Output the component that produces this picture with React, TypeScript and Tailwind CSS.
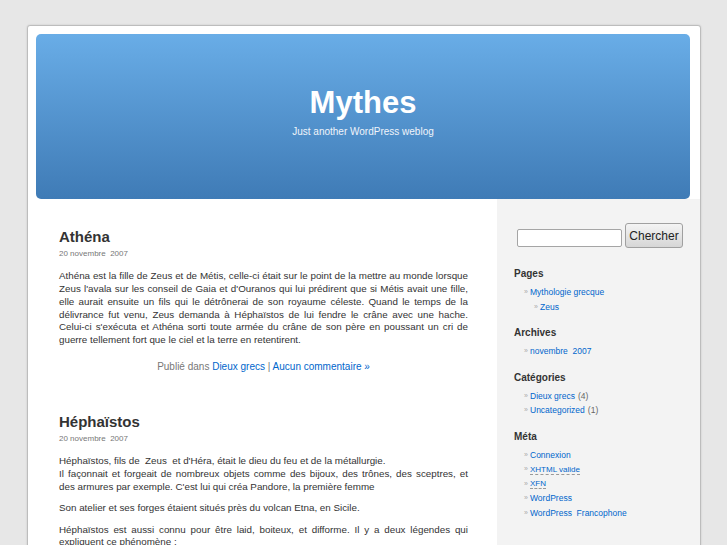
import React from 'react';

const font = { fontFamily: '"Liberation Sans", Arial, sans-serif' };

// renders justified lines with the same breaks as the original page
// (the last line, and lines that end in a <br>, stay left aligned)
function Lines({ lines, breaks = [] }: { lines: string[]; breaks?: number[] }) {
  return (
    <p>
      {lines.map((l, i) => {
        const plain = i === lines.length - 1 || breaks.includes(i);
        return (
          <span
            key={i}
            className={`block whitespace-nowrap ${plain ? 'text-left' : 'text-justify [text-align-last:justify]'}`}
          >
            {l}
          </span>
        );
      })}
    </p>
  );
}

function Post({ title, children, meta }: { title: string; children: React.ReactNode; meta?: boolean }) {
  return (
    <div className="mb-[40px]">
      <h2 className="text-[15px] leading-[18px] font-bold text-[#333]">{title}</h2>
      <div className="mt-[3px] text-[8px] leading-[10px] text-[#777] whitespace-pre">20 novembre  2007</div>
      <div className="mt-[11px] text-[9.8px] leading-[12.86px] text-[#333] flex flex-col gap-[8.5px]">{children}</div>
      {meta && (
        <p className="mt-[13px] text-center text-[10px] leading-[13px] text-[#777]">
          Publié dans <a className="text-[#06c]">Dieux grecs</a> | <a className="text-[#06c]">Aucun commentaire »</a>
        </p>
      )}
    </div>
  );
}

function Item({ children, nested, count }: { children: React.ReactNode; nested?: boolean; count?: number }) {
  return (
    <li className={`flex items-center leading-[14.5px] h-[14.5px] ${nested ? 'pl-[37px]' : 'pl-[27px]'}`}>
      <span className="text-[7px] text-[#aaa] w-[6px]">»</span>
      <span className="text-[8.5px] text-[#06c]">{children}</span>
      {count !== undefined && <span className="text-[8.5px] text-[#666] ml-[3px]">({count})</span>}
    </li>
  );
}

function Section({ title, children }: { title: string; children: React.ReactNode }) {
  return (
    <div className="mb-[12px]">
      <h3 className="pl-[17px] text-[10px] leading-[14px] font-bold text-[#333] mb-[4px]">{title}</h3>
      <ul>{children}</ul>
    </div>
  );
}

export default function App() {
  return (
    <div className="h-[545px] w-[727px] overflow-hidden bg-[#e7e7e7]" style={font}>
      <div className="ml-[27px] mt-[25px] w-[674px] h-[600px] bg-white border border-[#bdbdbd] rounded-[3px] shadow-[0_0_2px_rgba(0,0,0,0.15)]">
        <div className="pt-[8px] pl-[8px]">
          <div className="w-[654px] h-[165px] rounded-[5px] bg-gradient-to-b from-[#69ade7] to-[#3f7bb6] flex flex-col items-center">
            <h1 className="mt-[52px] text-[31px] leading-[34px] font-bold text-white">Mythes</h1>
            <div className="mt-[6px] text-[10px] leading-[12px] text-[#f0f4fa]">Just another WordPress weblog</div>
          </div>
        </div>
        <div className="flex">
          <div className="w-[469px] pl-[31px] pr-[29px] pt-[29px]">
            <Post title="Athéna" meta>
              <Lines
                lines={[
                  'Athéna est la fille de Zeus et de Métis, celle-ci était sur le point de la mettre au monde lorsque',
                  "Zeus l'avala sur les conseil de Gaia et d'Ouranos qui lui prédirent que si Métis avait une fille,",
                  'elle aurait ensuite un fils qui le détrônerai de son royaume céleste. Quand le temps de la',
                  'délivrance fut venu, Zeus demanda à Héphaïstos de lui fendre le crâne avec une hache.',
                  "Celui-ci s'exécuta et Athéna sorti toute armée du crâne de son père en poussant un cri de",
                  'guerre tellement fort que le ciel et la terre en retentirent.',
                ]}
              />
            </Post>
            <Post title="Héphaïstos">
              <Lines
                breaks={[0]}
                lines={[
                  "Héphaïstos, fils de\u00a0 Zeus\u00a0 et d'Héra, était le dieu du feu et de la métallurgie.",
                  'Il façonnait et forgeait de nombreux objets comme des bijoux, des trônes, des sceptres, et',
                  "des armures par exemple. C'est lui qui créa Pandore, la première femme",
                ]}
              />
              <Lines lines={['Son atelier et ses forges étaient situés près du volcan Etna, en Sicile.']} />
              <Lines
                lines={[
                  'Héphaïstos est aussi connu pour être laid, boiteux, et difforme. Il y a deux légendes qui',
                  'expliquent ce phénomène :',
                ]}
              />
            </Post>
          </div>
          <div className="w-[203px] h-[420px] bg-[#f3f3f3]">
            <div className="flex items-end pt-[24px] pl-[20px]">
              <input className="w-[105px] h-[18px] mb-[1px] bg-white border border-[#a5a5a5] rounded-[2px]" />
              <button className="ml-[3px] w-[58px] h-[25px] rounded-[3px] border border-[#a0a0a0] bg-gradient-to-b from-[#f4f4f4] to-[#d6d6d6] text-[12px] text-[#222]">
                Chercher
              </button>
            </div>
            <div className="mt-[19px]">
              <Section title="Pages">
                <Item>Mythologie grecque</Item>
                <Item nested>Zeus</Item>
              </Section>
              <Section title="Archives">
                <Item>novembre&nbsp; 2007</Item>
              </Section>
              <Section title="Catégories">
                <Item count={4}>Dieux grecs</Item>
                <Item count={1}>Uncategorized</Item>
              </Section>
              <Section title="Méta">
                <Item>Connexion</Item>
                <Item>
                  <span className="text-[8px] border-b border-dashed border-[#999]">XHTML valide</span>
                </Item>
                <Item>
                  <span className="text-[8px] border-b border-dashed border-[#999]">XFN</span>
                </Item>
                <Item>WordPress</Item>
                <Item>WordPress&nbsp; Francophone</Item>
              </Section>
            </div>
          </div>
        </div>
      </div>
    </div>
  );
}
